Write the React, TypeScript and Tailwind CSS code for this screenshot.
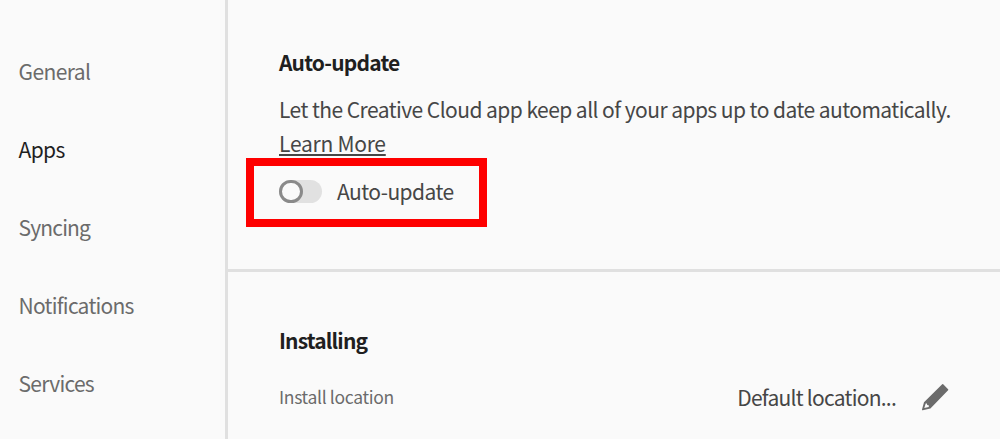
import React, { useState } from 'react';

const navItems = [
  { label: 'General', tracking: 'tracking-[-0.6px]' },
  { label: 'Apps', tracking: 'tracking-[-0.65px]' },
  { label: 'Syncing', tracking: 'tracking-[-0.85px]' },
  { label: 'Notifications', tracking: 'tracking-[-0.75px]' },
  { label: 'Services', tracking: 'tracking-[-0.75px]' },
];

const Sidebar: React.FC<{ active: string; onSelect: (item: string) => void }> = ({ active, onSelect }) => (
  <nav className="flex w-[228px] shrink-0 flex-col border-r-[3px] border-[#e0e0e0] pt-[32px]">
    {navItems.map(({ label, tracking }) => (
      <button
        key={label}
        onClick={() => onSelect(label)}
        className={`h-[78px] shrink-0 pl-[18.6px] text-left text-[21px] leading-[78px] ${tracking} ${
          label === active ? 'text-[#1f1f1f]' : 'text-[#6b6b6b]'
        }`}
      >
        {label}
      </button>
    ))}
  </nav>
);

const Toggle: React.FC<{ checked: boolean; onChange: () => void }> = ({ checked, onChange }) => (
  <button
    role="switch"
    aria-checked={checked}
    aria-label="Auto-update"
    onClick={onChange}
    className={`flex h-[23px] w-[43px] rounded-full bg-[#e1e1e1] ${checked ? 'justify-end' : 'justify-start'}`}
  >
    <span className="h-[23px] w-[24px] rounded-full border-[3px] border-[#8a8a8a] bg-[#fafafa]" />
  </button>
);

const PencilIcon = () => (
  <svg width="28" height="28" viewBox="0 0 28 28" aria-hidden="true">
    <path
      fillRule="evenodd"
      fill="#6b6b6b"
      d="M21.2 1.2a.7.7 0 0 1 1 0l4.9 5a.7.7 0 0 1 0 1L9.4 25.5 1.8 27.3a.6.6 0 0 1-.8-.7L3 19.2ZM4.7 20.6 3.3 25.1l4.4-1.1.3-1.6-1.8-.3-.3-1.5Z"
    />
  </svg>
);

export default function App() {
  const [active, setActive] = useState('Apps');
  const [autoUpdate, setAutoUpdate] = useState(false);

  return (
    <div className="flex h-[439px] w-[1000px] overflow-hidden bg-[#fafafa] font-['Noto_Sans_CJK_JP',sans-serif] text-[21px] text-[#464646]">
      <Sidebar active={active} onSelect={setActive} />

      <main className="flex min-w-0 flex-1 flex-col">
        <section className="h-[272px] shrink-0 border-b-[3px] border-[#e0e0e0] pt-[45px] pl-[51px]">
          <h2 className="leading-[34px] font-bold tracking-[-0.8px] text-[#1f1f1f]">Auto-update</h2>
          <p className="mt-[13px] leading-[34px] tracking-[-0.55px] whitespace-nowrap">
            Let the Creative Cloud app keep all of your apps up to date automatically.
            <br />
            <a
              href="#"
              className="tracking-[-0.25px] underline decoration-[1.5px] underline-offset-[2px] [text-decoration-skip-ink:none]"
            >
              Learn More
            </a>
          </p>
          <div className="relative mt-[14px] flex h-[34px] w-fit items-center gap-[15px]">
            <Toggle checked={autoUpdate} onChange={() => setAutoUpdate(!autoUpdate)} />
            <span className="-mt-px leading-[34px] tracking-[-0.55px]">Auto-update</span>
            <div className="pointer-events-none absolute -top-[16px] -left-[33px] h-[69px] w-[241px] border-8 border-[#fe0000]" />
          </div>
        </section>

        <section className="pt-[51px] pr-[51px] pl-[51px]">
          <h2 className="leading-[34px] font-bold tracking-[-0.85px] text-[#1f1f1f]">Installing</h2>
          <div className="mt-[23px] flex h-[34px] items-center">
            <span className="text-[17.5px] leading-[34px] tracking-[-0.33px] text-[#6b6b6b]">Install location</span>
            <span className="ml-auto leading-[34px] tracking-[-0.75px]">Default location...</span>
            <button aria-label="Edit install location" className="ml-[25px]">
              <PencilIcon />
            </button>
          </div>
        </section>
      </main>
    </div>
  );
}
